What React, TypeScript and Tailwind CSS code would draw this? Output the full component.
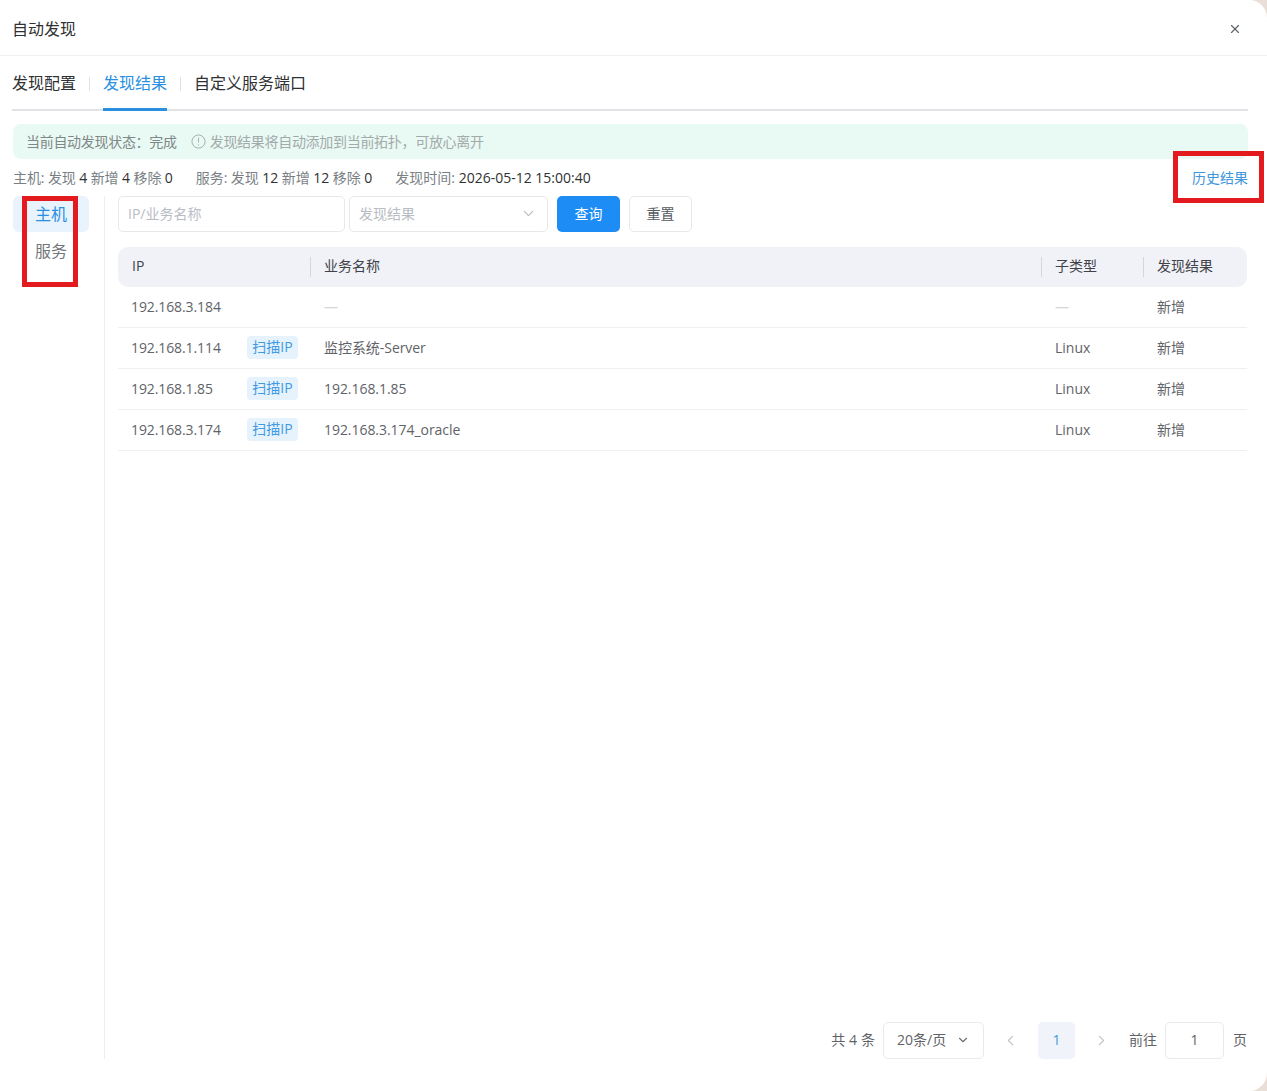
import { ChevronDown, ChevronLeft, ChevronRight, X } from "lucide-react";

const rows = [
    { ip: "192.168.3.184", scan: false, name: "—", type: "—", result: "新增" },
    { ip: "192.168.1.114", scan: true, name: "监控系统-Server", type: "Linux", result: "新增" },
    { ip: "192.168.1.85", scan: true, name: "192.168.1.85", type: "Linux", result: "新增" },
    { ip: "192.168.3.174", scan: true, name: "192.168.3.174_oracle", type: "Linux", result: "新增" },
];

function Num({ children }: { children: React.ReactNode }) {
    return <span className="text-[#303133]">{children}</span>;
}

function Tabs() {
    return (
        <div className="ml-[12px] mr-[19px] flex h-[55px] items-start border-b-2 border-[#e2e3e6] text-[16px] text-[#303133]">
            <div className="flex h-[55px] items-center pb-[2px]">发现配置</div>
            <div className="mx-[13px] mt-[21px] h-[14px] w-px bg-[#dfe1e5]" />
            <div className="flex h-[55px] items-center border-b-[3px] border-[#2a8fe0] pt-px text-[#2a8fe0]">发现结果</div>
            <div className="mx-[13px] mt-[21px] h-[14px] w-px bg-[#dfe1e5]" />
            <div className="flex h-[55px] items-center pb-[2px]">自定义服务端口</div>
        </div>
    );
}

function Filters() {
    return (
        <div className="flex h-[36px] text-[14px]">
            <div className="flex w-[227px] items-center rounded-[5px] border border-[#e6e8ec] px-[9px] pb-[2px] text-[#b8bcc4]">IP/业务名称</div>
            <div className="ml-[4px] flex w-[199px] items-center justify-between rounded-[5px] border border-[#e6e8ec] pb-[2px] pl-[9px] pr-[10px] text-[#b8bcc4]">
                发现结果
                <ChevronDown className="h-[17px] w-[17px] text-[#b4b8bf]" strokeWidth={1.5} />
            </div>
            <div className="ml-[9px] flex w-[63px] items-center justify-center rounded-[5px] bg-[#1e8cf5] pb-[2px] text-white">查询</div>
            <div className="ml-[9px] flex w-[63px] items-center justify-center rounded-[5px] border border-[#e6e8ec] pb-[2px] text-[#555a61]">重置</div>
        </div>
    );
}

function Table() {
    return (
        <div className="mt-[15px] w-[1129px] text-[14px] text-[#5f6368]">
            <div className="grid h-[40px] grid-cols-[193px_731px_102px_103px] items-center rounded-[10px] bg-[#f1f2f7] text-[#3f4349]">
                <div className="h-[20px] border-r border-[#d5d7dc] pl-[14px] leading-[18px]">IP</div>
                <div className="h-[20px] border-r border-[#d5d7dc] pl-[13px] leading-[18px]">业务名称</div>
                <div className="h-[20px] border-r border-[#d5d7dc] pl-[13px] leading-[18px]">子类型</div>
                <div className="h-[20px] pl-[13px] leading-[18px]">发现结果</div>
            </div>
            {rows.map((row) => (
                <div key={row.ip} className="grid h-[41px] grid-cols-[193px_731px_102px_103px] items-center border-b border-[#eef0f3] pb-[2px]">
                    <div className="flex items-center pl-[13px]">
                        <span className="w-[116px] tracking-[-0.1px]">{row.ip}</span>
                        {row.scan && (
                            <span className="flex h-[23px] w-[51px] items-center justify-center rounded-[4px] bg-[#e6f2fc] pb-[2px] text-[#3f9be3]">扫描IP</span>
                        )}
                    </div>
                    <div className={row.name === "—" ? "pl-[13px] text-[#d4d6da]" : "pl-[13px] tracking-[-0.05px]"}>{row.name}</div>
                    <div className={row.type === "—" ? "pl-[13px] text-[#d4d6da]" : "pl-[13px]"}>{row.type}</div>
                    <div className="pl-[13px]">{row.result}</div>
                </div>
            ))}
        </div>
    );
}

function Pagination() {
    return (
        <div className="mt-auto flex h-[37px] items-center justify-end text-[14px] text-[#5f6368]">
            <span className="pb-[2px] tracking-[0.1px]">共 4 条</span>
            <div className="ml-[8px] flex h-[37px] w-[101px] items-center justify-between rounded-[5px] border border-[#e8eaee] pb-[2px] pl-[13px] pr-[13px]">
                20条/页
                <ChevronDown className="h-[14px] w-[14px] text-[#6b7077]" strokeWidth={2} />
            </div>
            <ChevronLeft className="ml-[18px] h-[17px] w-[17px] text-[#c0c4cb]" strokeWidth={1.5} />
            <div className="ml-[19px] flex h-[37px] w-[37px] items-center justify-center rounded-[5px] bg-[#f0f3f9] pb-[2px] text-[#3f9be3]">1</div>
            <ChevronRight className="ml-[18px] h-[17px] w-[17px] text-[#c0c4cb]" strokeWidth={1.5} />
            <span className="ml-[19px] pb-[2px]">前往</span>
            <div className="ml-[8px] flex h-[37px] w-[59px] items-center justify-center rounded-[5px] border border-[#e8eaee] pb-[2px]">1</div>
            <span className="ml-[9px] pb-[2px]">页</span>
        </div>
    );
}

export default function App() {
    return (
        <div className="relative h-[1091px] w-[1267px] overflow-hidden bg-[#eaded9] font-['Open_Sans','Noto_Sans_CJK_SC',sans-serif]">
            <div className="flex h-full flex-col rounded-r-[18px] bg-white">
                <div className="flex h-[56px] shrink-0 items-center justify-between border-b border-[#f0f1f3] pl-[12px] pr-[25px] pt-[3px] text-[16px] text-[#303133]">
                    自动发现
                    <X className="h-[14px] w-[14px] text-[#5f6368]" strokeWidth={2} />
                </div>
                <Tabs />
                <div className="ml-[13px] mr-[19px] mt-[13px] flex h-[35px] items-center rounded-[8px] bg-[#e9f9f4] pl-[13px] text-[14px] text-[#7e8886]">
                    <span className="tracking-[-0.3px]">当前自动发现状态：完成</span>
                    <span className="ml-[14px] flex items-center gap-[4px] text-[#a3abaa]">
                        <svg className="h-[15px] w-[15px]" viewBox="0 0 16 16" fill="none" stroke="currentColor" strokeWidth="1">
                            <circle cx="8" cy="8" r="7" />
                            <path d="M8 4v5M8 11v1.2" />
                        </svg>
                        <span className="tracking-[-0.3px]">发现结果将自动添加到当前拓扑，可放心离开</span>
                    </span>
                </div>
                <div className="ml-[13px] mr-[19px] mt-[9px] flex h-[20px] items-center justify-between text-[14px] leading-[20px] text-[#7a7f86]">
                    <div className="flex gap-[23px]">
                        <span className="tracking-[-0.1px]">主机: 发现 <Num>4</Num> 新增 <Num>4</Num> 移除 <Num>0</Num></span>
                        <span className="tracking-[-0.05px]">服务: 发现 <Num>12</Num> 新增 <Num>12</Num> 移除 <Num>0</Num></span>
                        <span>发现时间: <Num>2026-05-12 15:00:40</Num></span>
                    </div>
                    <span className="text-[#3f96dc]">历史结果</span>
                </div>
                <div className="ml-[13px] mt-[8px] flex h-[863px]">
                    <div className="w-[92px] border-r border-[#eceef1] pr-[15px] text-[16px]">
                        <div className="flex h-[36px] items-center justify-center rounded-[6px] bg-[#e9f3fd] text-[#2a8fe0]">主机</div>
                        <div className="mt-px flex h-[36px] items-center justify-center text-[#72767c]">服务</div>
                    </div>
                    <div className="ml-[13px] flex flex-col">
                        <Filters />
                        <Table />
                        <Pagination />
                    </div>
                </div>
            </div>
            <div className="absolute left-[22px] top-[196px] h-[91px] w-[56px] border-[5px] border-[#e41b1e]" />
            <div className="absolute left-[1173px] top-[151px] h-[52px] w-[91px] border-[5px] border-[#e41b1e]" />
        </div>
    );
}
